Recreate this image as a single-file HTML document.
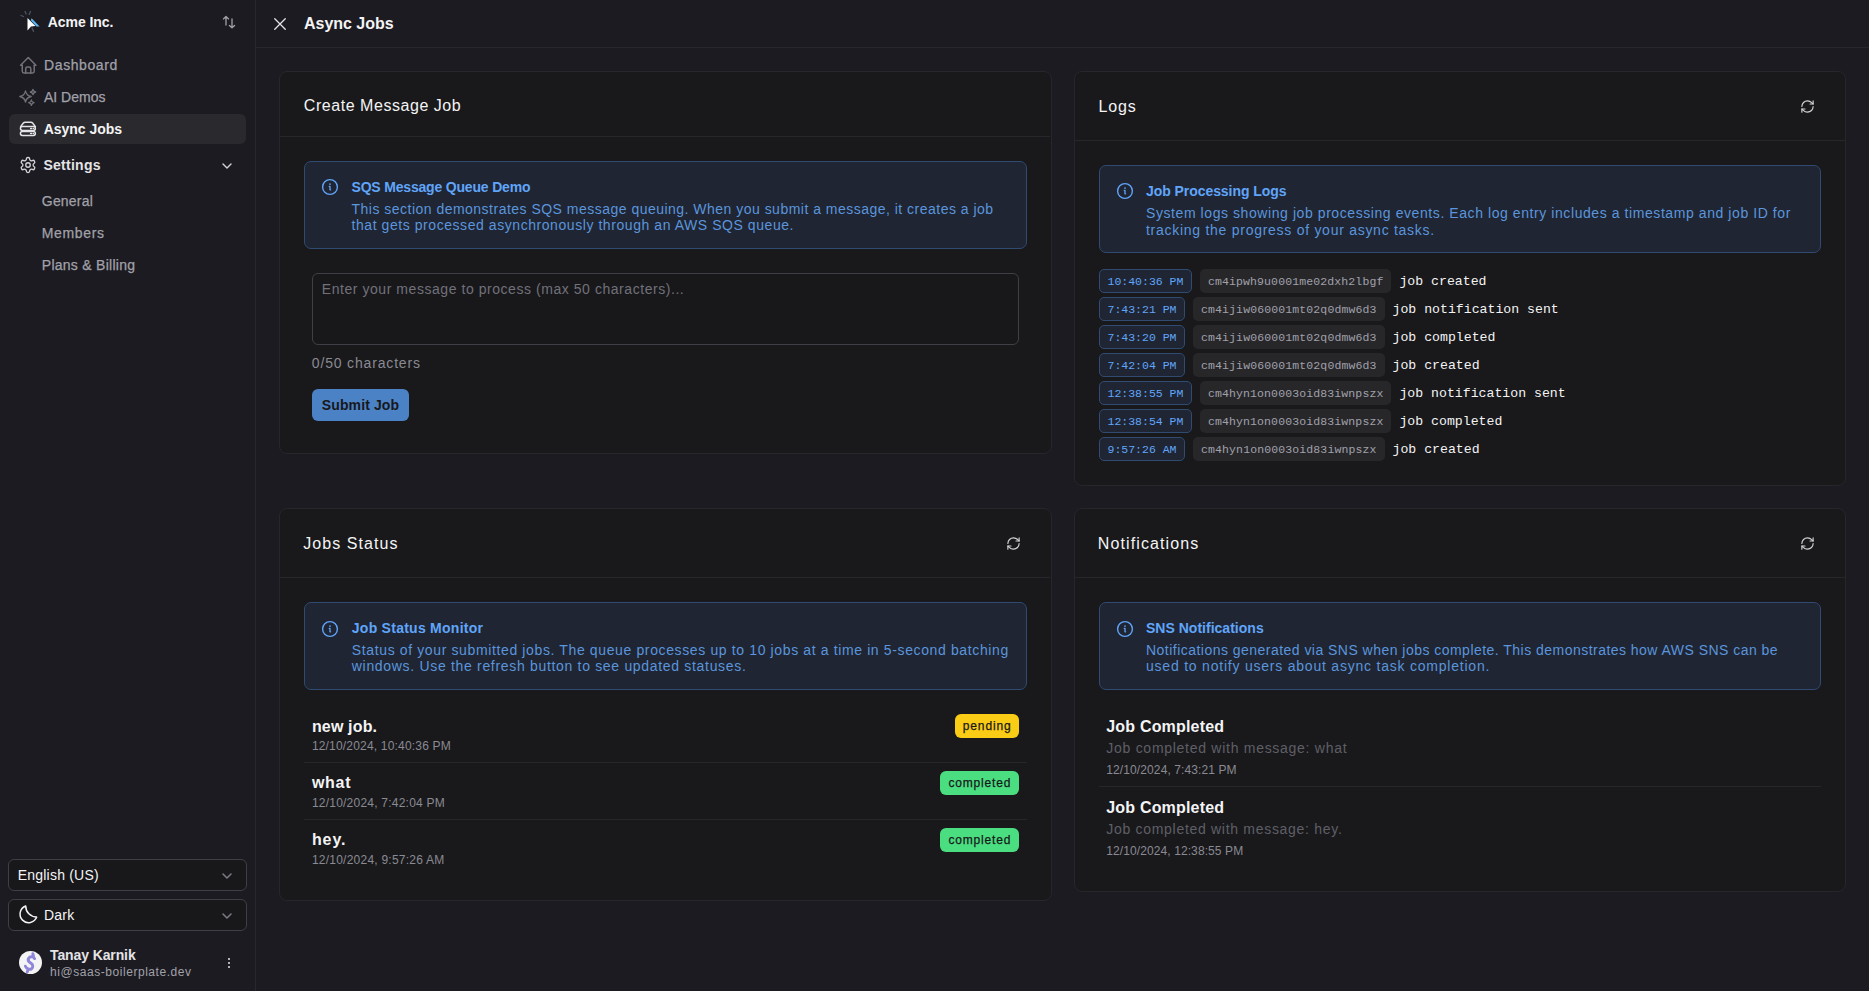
<!DOCTYPE html>
<html><head><meta charset="utf-8"><title>Async Jobs</title>
<style>
*{margin:0;padding:0;box-sizing:border-box}
html,body{width:1869px;height:991px;overflow:hidden;background:#1c1b21;font-family:"Liberation Sans", sans-serif}
.b{position:absolute}
.t{position:absolute;white-space:nowrap;line-height:20px}
.lr{position:absolute;left:1099px;height:24px;display:flex;align-items:center;font-family:"Liberation Mono", monospace;white-space:nowrap}
.ts{height:24px;line-height:24px;padding:0 7.5px;border:1px solid #2f4b72;background:#1f2532;color:#60a5fa;font-size:11.5px;border-radius:5px;letter-spacing:0px}
.jid{height:24px;line-height:26px;padding:0 8px;background:#27272a;color:#a1a1aa;font-size:11.5px;border-radius:5px;margin-left:8px;letter-spacing:0.12px}
.msg{margin-left:8px;color:#f4f4f5;font-size:13.2px;line-height:26px;height:24px}
</style></head><body>
<div class="b" style="left:255px;top:0px;width:1px;height:991px;background:#27272c;border-radius:0px;"></div><div class="b" style="left:256px;top:47px;width:1613px;height:1px;background:#27272c;border-radius:0px;"></div><div class="b" style="left:9px;top:114px;width:237px;height:30px;background:#2a2a2e;border-radius:6px;"></div><div class="b" style="left:8px;top:859px;width:239px;height:32px;background:#18181b;border:1px solid #3f3f46;border-radius:6px;"></div><div class="b" style="left:8px;top:899px;width:239px;height:32px;background:#18181b;border:1px solid #3f3f46;border-radius:6px;"></div><div class="b" style="left:279px;top:71px;width:773px;height:383px;background:#19191c;border:1px solid #26262b;border-radius:8px;"></div><div class="b" style="left:1074px;top:71px;width:772px;height:415px;background:#19191c;border:1px solid #26262b;border-radius:8px;"></div><div class="b" style="left:279px;top:508px;width:773px;height:393px;background:#19191c;border:1px solid #26262b;border-radius:8px;"></div><div class="b" style="left:1074px;top:508px;width:772px;height:384px;background:#19191c;border:1px solid #26262b;border-radius:8px;"></div><div class="b" style="left:280px;top:136px;width:770px;height:1px;background:#26262b;border-radius:0px;"></div><div class="b" style="left:1075px;top:140px;width:770px;height:1px;background:#26262b;border-radius:0px;"></div><div class="b" style="left:280px;top:577px;width:770px;height:1px;background:#26262b;border-radius:0px;"></div><div class="b" style="left:1075px;top:577px;width:770px;height:1px;background:#26262b;border-radius:0px;"></div><div class="b" style="left:304px;top:161px;width:723px;height:88px;background:#1f2532;border:1px solid #2f4b72;border-radius:7px;"></div><div class="b" style="left:1099px;top:165px;width:722px;height:88px;background:#1f2532;border:1px solid #2f4b72;border-radius:7px;"></div><div class="b" style="left:304px;top:602px;width:723px;height:88px;background:#1f2532;border:1px solid #2f4b72;border-radius:7px;"></div><div class="b" style="left:1099px;top:602px;width:722px;height:88px;background:#1f2532;border:1px solid #2f4b72;border-radius:7px;"></div><div class="b" style="left:312px;top:273px;width:707px;height:72px;background:#18181b;border:1px solid #3f3f46;border-radius:6px;"></div><div class="b" style="left:312px;top:389px;width:97px;height:32px;background:#4b82c6;border-radius:6px;"></div><div class="b" style="left:304px;top:762px;width:723px;height:1px;background:#27272a;border-radius:0px;"></div><div class="b" style="left:304px;top:819px;width:723px;height:1px;background:#27272a;border-radius:0px;"></div><div class="b" style="left:955px;top:714px;width:64px;height:24px;background:#facc15;border-radius:6px;"></div><div class="b" style="left:940px;top:771px;width:79px;height:24px;background:#4ade80;border-radius:6px;"></div><div class="b" style="left:940px;top:828px;width:79px;height:24px;background:#4ade80;border-radius:6px;"></div><div class="b" style="left:1099px;top:786px;width:722px;height:1px;background:#27272a;border-radius:0px;"></div><div class="lr" style="top:269px"><span class="ts">10:40:36 PM</span><span class="jid">cm4ipwh9u0001me02dxh2lbgf</span><span class="msg">job created</span></div><div class="lr" style="top:297px"><span class="ts">7:43:21 PM</span><span class="jid">cm4ijiw060001mt02q0dmw6d3</span><span class="msg">job notification sent</span></div><div class="lr" style="top:325px"><span class="ts">7:43:20 PM</span><span class="jid">cm4ijiw060001mt02q0dmw6d3</span><span class="msg">job completed</span></div><div class="lr" style="top:353px"><span class="ts">7:42:04 PM</span><span class="jid">cm4ijiw060001mt02q0dmw6d3</span><span class="msg">job created</span></div><div class="lr" style="top:381px"><span class="ts">12:38:55 PM</span><span class="jid">cm4hyn1on0003oid83iwnpszx</span><span class="msg">job notification sent</span></div><div class="lr" style="top:409px"><span class="ts">12:38:54 PM</span><span class="jid">cm4hyn1on0003oid83iwnpszx</span><span class="msg">job completed</span></div><div class="lr" style="top:437px"><span class="ts">9:57:26 AM</span><span class="jid">cm4hyn1on0003oid83iwnpszx</span><span class="msg">job created</span></div><svg style="position:absolute;left:15px;top:5px;width:30px;height:30px" viewBox="0 0 30 30"><g stroke="#4b5563" stroke-width="1.3" stroke-linecap="round"><line x1="6" y1="10.5" x2="8.5" y2="11.5"/><line x1="10" y1="6.5" x2="11.2" y2="9"/><line x1="15.5" y1="6.5" x2="14.2" y2="9.5"/><line x1="17" y1="23" x2="18.6" y2="26.5"/></g><path d="M12.5 13 L12.5 25.5 L16 21.5 L20.5 21 Z" fill="#ffffff"/><path d="M16.6 13.3 L24.6 21.6 L21.5 21.6 L15.8 15.2 Z" fill="#5ab8f5"/></svg><svg style="position:absolute;left:219px;top:13px;width:18px;height:18px;" viewBox="0 0 18 18" fill="none" stroke="#a1a1aa" stroke-width="1.3" stroke-linecap="round" stroke-linejoin="round"><path d="M7 3.8v8.2M4.4 5.9 7 3.5l2.6 2.4"/><path d="M13 6v8.4M10.4 12.4 13 14.8l2.6-2.4"/></svg><svg style="position:absolute;left:17.75px;top:54.85px;width:20.5px;height:20.5px;" viewBox="0 0 24 24" fill="none" stroke="#71717a" stroke-width="1.75" stroke-linecap="round" stroke-linejoin="round"><path d="M5 12l-2 0l9 -9l9 9l-2 0"/><path d="M5 12v7a2 2 0 0 0 2 2h10a2 2 0 0 0 2 -2v-7"/><path d="M9 21v-5a2 2 0 0 1 2 -2h2a2 2 0 0 1 2 2v5"/></svg><svg style="position:absolute;left:18px;top:86px;width:20px;height:20px;" viewBox="0 0 20 20" fill="none" stroke="#71717a" stroke-width="1.3" stroke-linecap="round" stroke-linejoin="round"><path d="M7.5 4.8Q8.4 9.6 13.2 10.5Q8.4 11.4 7.5 16.2Q6.6 11.4 1.8 10.5Q6.6 9.6 7.5 4.8Z"/><path d="M15 3.3Q15.4 5.6 17.7 6Q15.4 6.4 15 8.7Q14.6 6.4 12.3 6Q14.6 5.6 15 3.3Z"/><path d="M13.4 14Q13.8 16.3 16.1 16.7Q13.8 17.1 13.4 19.4Q13 17.1 10.7 16.7Q13 16.3 13.4 14Z"/></svg><svg style="position:absolute;left:16px;top:116px;width:24px;height:26px;" viewBox="0 0 24 26" fill="none" stroke="#e4e4e7" stroke-width="1.5" stroke-linecap="round" stroke-linejoin="round"><path d="M4.6 10.6 7.4 7Q8 6.25 9.1 6.25H14.9Q16 6.25 16.6 7L19.4 10.6"/><rect x="4.45" y="10.55" width="14.9" height="3.9" rx="1.9"/><rect x="4.45" y="15.45" width="14.9" height="4" rx="1.9"/><path d="M14.6 12.5h.9M17.3 12.5h.2M14.6 17.45h.9M17.3 17.45h.2"/></svg><svg style="position:absolute;left:19px;top:156.2px;width:18px;height:18px;" viewBox="0 0 24 24" fill="none" stroke="#d4d4d8" stroke-width="1.75" stroke-linecap="round" stroke-linejoin="round"><path d="M12.22 2h-.44a2 2 0 0 0-2 2v.18a2 2 0 0 1-1 1.73l-.43.25a2 2 0 0 1-2 0l-.15-.08a2 2 0 0 0-2.73.73l-.22.38a2 2 0 0 0 .73 2.73l.15.1a2 2 0 0 1 1 1.72v.51a2 2 0 0 1-1 1.74l-.15.09a2 2 0 0 0-.73 2.73l.22.38a2 2 0 0 0 2.73.73l.15-.08a2 2 0 0 1 2 0l.43.25a2 2 0 0 1 1 1.73V20a2 2 0 0 0 2 2h.44a2 2 0 0 0 2-2v-.18a2 2 0 0 1 1-1.73l.43-.25a2 2 0 0 1 2 0l.15.08a2 2 0 0 0 2.73-.73l.22-.39a2 2 0 0 0-.73-2.73l-.15-.08a2 2 0 0 1-1-1.74v-.5a2 2 0 0 1 1-1.74l.15-.09a2 2 0 0 0 .73-2.73l-.22-.38a2 2 0 0 0-2.73-.73l-.15.08a2 2 0 0 1-2 0l-.43-.25a2 2 0 0 1-1-1.73V4a2 2 0 0 0-2-2z"/><circle cx="12" cy="12" r="3"/></svg><svg style="position:absolute;left:219px;top:158px;width:16px;height:16px;" viewBox="0 0 16 16" fill="none" stroke="#d4d4d8" stroke-width="1.4" stroke-linecap="round" stroke-linejoin="round"><path d="m4 6 4 4 4-4"/></svg><svg style="position:absolute;left:219px;top:868px;width:16px;height:16px;" viewBox="0 0 16 16" fill="none" stroke="#7a7a82" stroke-width="1.6" stroke-linecap="round" stroke-linejoin="round"><path d="m4 6 4 4 4-4"/></svg><svg style="position:absolute;left:219px;top:908px;width:16px;height:16px;" viewBox="0 0 16 16" fill="none" stroke="#7a7a82" stroke-width="1.6" stroke-linecap="round" stroke-linejoin="round"><path d="m4 6 4 4 4-4"/></svg><svg style="position:absolute;left:14px;top:900px;width:30px;height:30px;" viewBox="0 0 30 30" fill="none" stroke="#f4f4f5" stroke-width="1.5" stroke-linecap="round" stroke-linejoin="round"><path d="M11.7 6A8.6 8.6 0 1 0 22.7 17.1A11 11 0 0 1 11.7 6Z"/></svg><div class="b" style="left:18.5px;top:951px;width:23px;height:23px;border-radius:50%;background:#f4f4f5"></div><svg style="position:absolute;left:12px;top:945px;width:36px;height:36px;" viewBox="0 0 36 36" fill="none" stroke="#8e86d8" stroke-width="2.9" stroke-linecap="round" stroke-linejoin="round"><path d="M22.6 13.6C21.6 11.3 17.8 11.2 16.5 13.4C15.3 15.7 17.3 17.3 19 18.3C21.1 19.5 21.4 22.4 19.6 23.7C17.6 25.1 14.5 23.8 13.4 21.2M20.8 8.7L21.5 11M15.9 24.6L15.3 26.9"/></svg><div class="b" style="left:227.5px;top:957.5px;width:2.2px;height:2.2px;border-radius:50%;background:#e4e4e7"></div><div class="b" style="left:227.5px;top:961.8px;width:2.2px;height:2.2px;border-radius:50%;background:#e4e4e7"></div><div class="b" style="left:227.5px;top:966px;width:2.2px;height:2.2px;border-radius:50%;background:#e4e4e7"></div><svg style="position:absolute;left:272px;top:16px;width:16px;height:16px;" viewBox="0 0 16 16" fill="none" stroke="#e4e4e7" stroke-width="1.3" stroke-linecap="round" stroke-linejoin="round"><path d="M2.75 2.75l10.5 10.5M13.25 2.75 2.75 13.25"/></svg><svg style="position:absolute;left:321px;top:178.3px;width:18px;height:18px;" viewBox="0 0 18 18" fill="none" stroke="#60a5fa" stroke-width="1.4" stroke-linecap="round" stroke-linejoin="round"><circle cx="9" cy="9" r="7.4"/><path d="M8.3 8.4h.7v3.4h.6" stroke-width="1.3"/><path d="M9 6.1h.01" stroke-width="1.7"/></svg><svg style="position:absolute;left:1116px;top:182px;width:18px;height:18px;" viewBox="0 0 18 18" fill="none" stroke="#60a5fa" stroke-width="1.4" stroke-linecap="round" stroke-linejoin="round"><circle cx="9" cy="9" r="7.4"/><path d="M8.3 8.4h.7v3.4h.6" stroke-width="1.3"/><path d="M9 6.1h.01" stroke-width="1.7"/></svg><svg style="position:absolute;left:321px;top:619.5px;width:18px;height:18px;" viewBox="0 0 18 18" fill="none" stroke="#60a5fa" stroke-width="1.4" stroke-linecap="round" stroke-linejoin="round"><circle cx="9" cy="9" r="7.4"/><path d="M8.3 8.4h.7v3.4h.6" stroke-width="1.3"/><path d="M9 6.1h.01" stroke-width="1.7"/></svg><svg style="position:absolute;left:1116px;top:619.5px;width:18px;height:18px;" viewBox="0 0 18 18" fill="none" stroke="#60a5fa" stroke-width="1.4" stroke-linecap="round" stroke-linejoin="round"><circle cx="9" cy="9" r="7.4"/><path d="M8.3 8.4h.7v3.4h.6" stroke-width="1.3"/><path d="M9 6.1h.01" stroke-width="1.7"/></svg><svg style="position:absolute;left:1799.5px;top:98.5px;width:15px;height:15px;" viewBox="0 0 24 24" fill="none" stroke="#d4d4d8" stroke-width="1.8" stroke-linecap="round" stroke-linejoin="round"><path d="M3 12a9 9 0 0 1 9-9 9.75 9.75 0 0 1 6.74 2.74L21 8"/><path d="M21 3v5h-5"/><path d="M21 12a9 9 0 0 1-9 9 9.75 9.75 0 0 1-6.74-2.74L3 16"/><path d="M8 16H3v5"/></svg><svg style="position:absolute;left:1005.5px;top:535.8px;width:15px;height:15px;" viewBox="0 0 24 24" fill="none" stroke="#d4d4d8" stroke-width="1.8" stroke-linecap="round" stroke-linejoin="round"><path d="M3 12a9 9 0 0 1 9-9 9.75 9.75 0 0 1 6.74 2.74L21 8"/><path d="M21 3v5h-5"/><path d="M21 12a9 9 0 0 1-9 9 9.75 9.75 0 0 1-6.74-2.74L3 16"/><path d="M8 16H3v5"/></svg><svg style="position:absolute;left:1799.5px;top:535.8px;width:15px;height:15px;" viewBox="0 0 24 24" fill="none" stroke="#d4d4d8" stroke-width="1.8" stroke-linecap="round" stroke-linejoin="round"><path d="M3 12a9 9 0 0 1 9-9 9.75 9.75 0 0 1 6.74 2.74L21 8"/><path d="M21 3v5h-5"/><path d="M21 12a9 9 0 0 1-9 9 9.75 9.75 0 0 1-6.74-2.74L3 16"/><path d="M8 16H3v5"/></svg><div class="t" id="t_acme" style="left:47.80px;top:12.45px;font-size:14px;font-weight:700;color:#f4f4f5;letter-spacing:-0.058px;">Acme Inc.</div><div class="t" id="t_dash" style="left:44.10px;top:55.35px;font-size:14px;font-weight:500;color:#a1a1aa;letter-spacing:0.585px;-webkit-text-stroke:0.25px #a1a1aa">Dashboard</div><div class="t" id="t_aidemo" style="left:43.90px;top:86.85px;font-size:14px;font-weight:500;color:#a1a1aa;letter-spacing:0.016px;-webkit-text-stroke:0.25px #a1a1aa">AI Demos</div><div class="t" id="t_async" style="left:43.70px;top:119.35px;font-size:14px;font-weight:700;color:#f4f4f5;letter-spacing:-0.013px;">Async Jobs</div><div class="t" id="t_settings" style="left:43.50px;top:155.15px;font-size:14px;font-weight:700;color:#e4e4e7;letter-spacing:0.248px;">Settings</div><div class="t" id="t_general" style="left:41.80px;top:190.95px;font-size:14px;font-weight:500;color:#a1a1aa;letter-spacing:0.194px;-webkit-text-stroke:0.25px #a1a1aa">General</div><div class="t" id="t_members" style="left:41.80px;top:223.15px;font-size:14px;font-weight:500;color:#a1a1aa;letter-spacing:0.655px;-webkit-text-stroke:0.25px #a1a1aa">Members</div><div class="t" id="t_plans" style="left:41.80px;top:255.15px;font-size:14px;font-weight:500;color:#a1a1aa;letter-spacing:0.263px;-webkit-text-stroke:0.25px #a1a1aa">Plans &amp; Billing</div><div class="t" id="t_english" style="left:17.70px;top:865.05px;font-size:14px;font-weight:400;color:#f4f4f5;letter-spacing:0.218px;">English (US)</div><div class="t" id="t_dark" style="left:43.90px;top:905.15px;font-size:14px;font-weight:400;color:#f4f4f5;letter-spacing:0.236px;">Dark</div><div class="t" id="t_tanay" style="left:50.00px;top:944.95px;font-size:14px;font-weight:700;color:#e4e4e7;letter-spacing:-0.111px;">Tanay Karnik</div><div class="t" id="t_email" style="left:50.00px;top:962.44px;font-size:12px;font-weight:400;color:#a1a1aa;letter-spacing:0.551px;">hi@saas-boilerplate.dev</div><div class="t" id="t_hdr" style="left:304.00px;top:13.75px;font-size:16px;font-weight:700;color:#f4f4f5;letter-spacing:-0.022px;">Async Jobs</div><div class="t" id="t_c1title" style="left:303.80px;top:95.85px;font-size:16px;font-weight:400;color:#f4f4f5;letter-spacing:0.546px;">Create Message Job</div><div class="t" id="t_a1title" style="left:351.50px;top:176.75px;font-size:14px;font-weight:700;color:#60a5fa;letter-spacing:-0.184px;">SQS Message Queue Demo</div><div class="t" id="t_a1l1" style="left:351.50px;top:199.15px;font-size:14px;font-weight:400;color:#5b95dd;letter-spacing:0.485px;">This section demonstrates SQS message queuing. When you submit a message, it creates a job</div><div class="t" id="t_a1l2" style="left:351.50px;top:215.15px;font-size:14px;font-weight:400;color:#5b95dd;letter-spacing:0.562px;">that gets processed asynchronously through an AWS SQS queue.</div><div class="t" id="t_ph" style="left:321.80px;top:279.45px;font-size:14px;font-weight:400;color:#71717a;letter-spacing:0.552px;">Enter your message to process (max 50 characters)...</div><div class="t" id="t_chars" style="left:311.80px;top:353.15px;font-size:14px;font-weight:400;color:#8a8a92;letter-spacing:0.834px;">0/50 characters</div><div class="t" id="t_submit" style="left:321.80px;top:395.15px;font-size:14px;font-weight:700;color:#18181b;letter-spacing:0.117px;">Submit Job</div><div class="t" id="t_c2title" style="left:1098.40px;top:96.85px;font-size:16px;font-weight:400;color:#f4f4f5;letter-spacing:0.872px;">Logs</div><div class="t" id="t_a2title" style="left:1146.00px;top:180.65px;font-size:14px;font-weight:700;color:#60a5fa;letter-spacing:-0.062px;">Job Processing Logs</div><div class="t" id="t_a2l1" style="left:1146.00px;top:203.15px;font-size:14px;font-weight:400;color:#5b95dd;letter-spacing:0.575px;">System logs showing job processing events. Each log entry includes a timestamp and job ID for</div><div class="t" id="t_a2l2" style="left:1146.00px;top:219.65px;font-size:14px;font-weight:400;color:#5b95dd;letter-spacing:0.728px;">tracking the progress of your async tasks.</div><div class="t" id="t_c3title" style="left:303.30px;top:533.95px;font-size:16px;font-weight:400;color:#f4f4f5;letter-spacing:1.051px;">Jobs Status</div><div class="t" id="t_a3title" style="left:351.80px;top:617.75px;font-size:14px;font-weight:700;color:#60a5fa;letter-spacing:0.259px;">Job Status Monitor</div><div class="t" id="t_a3l1" style="left:351.80px;top:640.15px;font-size:14px;font-weight:400;color:#5b95dd;letter-spacing:0.628px;">Status of your submitted jobs. The queue processes up to 10 jobs at a time in 5-second batching</div><div class="t" id="t_a3l2" style="left:351.80px;top:656.35px;font-size:14px;font-weight:400;color:#5b95dd;letter-spacing:0.684px;">windows. Use the refresh button to see updated statuses.</div><div class="t" id="t_job0" style="left:311.90px;top:716.75px;font-size:16px;font-weight:700;color:#f4f4f5;letter-spacing:0.160px;">new job.</div><div class="t" id="t_jobd0" style="left:311.90px;top:735.84px;font-size:12px;font-weight:400;color:#8a8a92;letter-spacing:0.184px;">12/10/2024, 10:40:36 PM</div><div class="t" id="t_job1" style="left:311.90px;top:773.45px;font-size:16px;font-weight:700;color:#f4f4f5;letter-spacing:0.724px;">what</div><div class="t" id="t_jobd1" style="left:311.90px;top:792.64px;font-size:12px;font-weight:400;color:#8a8a92;letter-spacing:0.225px;">12/10/2024, 7:42:04 PM</div><div class="t" id="t_job2" style="left:311.90px;top:830.45px;font-size:16px;font-weight:700;color:#f4f4f5;letter-spacing:0.927px;">hey.</div><div class="t" id="t_jobd2" style="left:311.90px;top:849.84px;font-size:12px;font-weight:400;color:#8a8a92;letter-spacing:0.234px;">12/10/2024, 9:57:26 AM</div><div class="t" id="t_c4title" style="left:1097.80px;top:533.95px;font-size:16px;font-weight:400;color:#f4f4f5;letter-spacing:1.106px;">Notifications</div><div class="t" id="t_a4title" style="left:1146.00px;top:617.75px;font-size:14px;font-weight:700;color:#60a5fa;letter-spacing:0.013px;">SNS Notifications</div><div class="t" id="t_a4l1" style="left:1146.00px;top:640.15px;font-size:14px;font-weight:400;color:#5b95dd;letter-spacing:0.471px;">Notifications generated via SNS when jobs complete. This demonstrates how AWS SNS can be</div><div class="t" id="t_a4l2" style="left:1146.00px;top:656.35px;font-size:14px;font-weight:400;color:#5b95dd;letter-spacing:0.782px;">used to notify users about async task completion.</div><div class="t" id="t_nt0" style="left:1106.30px;top:716.65px;font-size:16px;font-weight:700;color:#f4f4f5;letter-spacing:0.179px;">Job Completed</div><div class="t" id="t_nm0" style="left:1106.30px;top:738.35px;font-size:14px;font-weight:400;color:#5f5f66;letter-spacing:0.722px;">Job completed with message: what</div><div class="t" id="t_nd0" style="left:1106.30px;top:759.94px;font-size:12px;font-weight:400;color:#8a8a92;letter-spacing:0.106px;">12/10/2024, 7:43:21 PM</div><div class="t" id="t_nt1" style="left:1106.30px;top:797.65px;font-size:16px;font-weight:700;color:#f4f4f5;letter-spacing:0.179px;">Job Completed</div><div class="t" id="t_nm1" style="left:1106.30px;top:818.95px;font-size:14px;font-weight:400;color:#5f5f66;letter-spacing:0.701px;">Job completed with message: hey.</div><div class="t" id="t_nd1" style="left:1106.30px;top:841.04px;font-size:12px;font-weight:400;color:#8a8a92;letter-spacing:0.094px;">12/10/2024, 12:38:55 PM</div><div class="t" id="t_b0" style="left:962.80px;top:715.84px;font-size:12px;font-weight:500;color:#18181b;letter-spacing:0.855px;-webkit-text-stroke:0.25px #18181b">pending</div><div class="t" id="t_b1" style="left:948.50px;top:772.84px;font-size:12px;font-weight:500;color:#18181b;letter-spacing:0.809px;-webkit-text-stroke:0.25px #18181b">completed</div><div class="t" id="t_b2" style="left:948.50px;top:829.84px;font-size:12px;font-weight:500;color:#18181b;letter-spacing:0.809px;-webkit-text-stroke:0.25px #18181b">completed</div>
</body></html>
